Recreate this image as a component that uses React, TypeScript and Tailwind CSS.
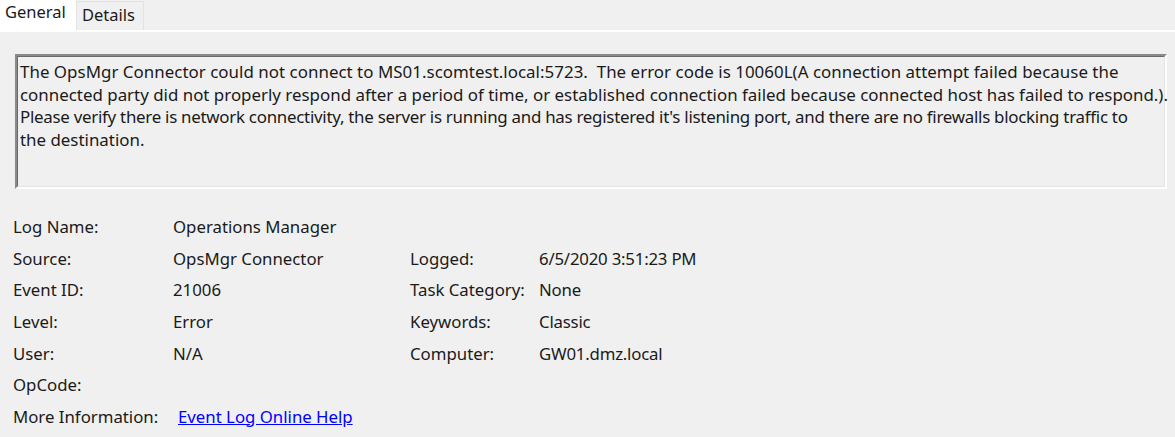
export default function App() {
  const left = [
    ["Log Name:", "Operations Manager"],
    ["Source:", "OpsMgr Connector"],
    ["Event ID:", "21006"],
    ["Level:", "Error"],
    ["User:", "N/A"],
    ["OpCode:", ""],
  ]
  const right = [
    ["", ""],
    ["Logged:", "6/5/2020 3:51:23 PM"],
    ["Task Category:", "None"],
    ["Keywords:", "Classic"],
    ["Computer:", "GW01.dmz.local"],
    ["", ""],
  ]

  return (
    <div
      className="w-[1175px] h-[437px] bg-[#f0f0f0] text-[#1a1a1a] overflow-hidden"
      style={{ fontFamily: '"Noto Sans", "Open Sans", sans-serif' }}
    >
      {/* tab strip */}
      <div className="flex items-end h-[32px] border-b-2 border-white">
        <div className="w-[76px] h-[32px] bg-white px-[5px] pt-[2px] text-[16.5px]">General</div>
        <div className="w-[68px] h-[29px] bg-[#f0f0f0] border border-b-0 border-[#e3e3e3] px-[5px] pt-[1px] text-[16.5px]">
          Details
        </div>
      </div>

      {/* description box */}
      <div className="mt-[22px] ml-[15px] w-[1152px] h-[135px] border-t-2 border-l-2 border-t-[#8a8a8a] border-l-[#8a8a8a] border-b-2 border-r-2 border-b-white border-r-white">
        <div className="w-full h-full border-t border-l border-t-[#696969] border-l-[#696969] border-b border-r border-b-[#e3e3e3] border-r-[#e3e3e3] pl-[2px] pt-[4px] text-[16.9px] leading-[22.6px] whitespace-pre">
          <div className="tracking-[0.03px]">The OpsMgr Connector could not connect to MS01.scomtest.local:5723.  The error code is 10060L(A connection attempt failed because the</div>
          <div>connected party did not properly respond after a period of time, or established connection failed because connected host has failed to respond.).</div>
          <div className="tracking-[-0.27px]">Please verify there is network connectivity, the server is running and has registered it's listening port, and there are no firewalls blocking traffic to</div>
          <div>the destination.</div>
        </div>
      </div>

      {/* properties */}
      <div className="mt-[22px] pl-[13px] text-[16.8px]">
        {left.map((row, i) => (
          <div key={i} className="flex h-[31.6px] items-center">
            <div className="w-[160px]">{row[0]}</div>
            <div className="w-[237px]">{row[1]}</div>
            <div className="w-[129px]">{right[i][0]}</div>
            <div className="tracking-[-0.2px]">{right[i][1]}</div>
          </div>
        ))}
        <div className="flex h-[31.6px] items-center">
          <div className="w-[165px]">More Information:</div>
          <a href="#" className="text-[#0000ff] underline">Event Log Online Help</a>
        </div>
      </div>
    </div>
  )
}
